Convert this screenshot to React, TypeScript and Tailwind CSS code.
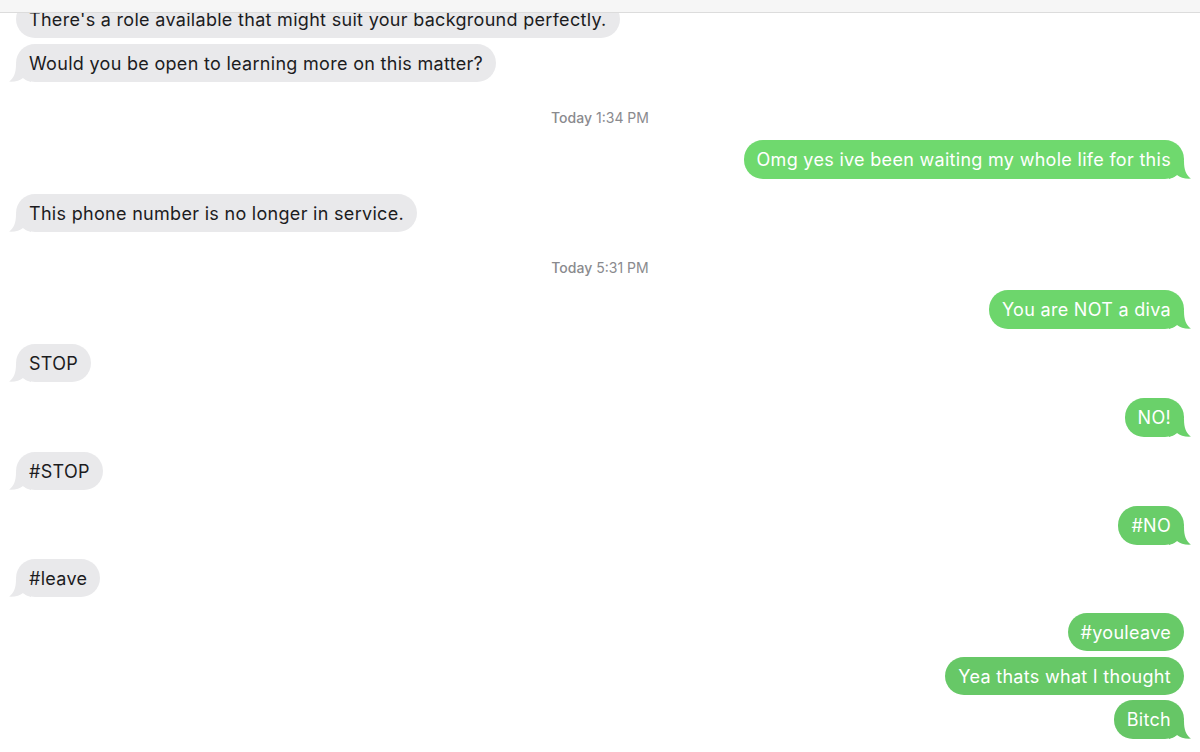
import React from "react";

type Msg =
  | { kind: "time"; day: string; time: string }
  | { kind: "in"; text: string; tail: boolean; mt: number }
  | { kind: "out"; text: string; tail: boolean; mt: number; bg: string; fill: string };

const messages: Msg[] = [
  { kind: "in", text: "There's a role available that might suit your background perfectly.", tail: false, mt: 0 },
  { kind: "in", text: "Would you be open to learning more on this matter?", tail: true, mt: 6 },
  { kind: "time", day: "Today", time: "1:34 PM" },
  { kind: "out", text: "Omg yes ive been waiting my whole life for this", tail: true, mt: 15, bg: "bg-[#6fd96e]", fill: "text-[#6fd96e]" },
  { kind: "in", text: "This phone number is no longer in service.", tail: true, mt: 15 },
  { kind: "time", day: "Today", time: "5:31 PM" },
  { kind: "out", text: "You are NOT a diva", tail: true, mt: 15, bg: "bg-[#6dd66c]", fill: "text-[#6dd66c]" },
  { kind: "in", text: "STOP", tail: true, mt: 15 },
  { kind: "out", text: "NO!", tail: true, mt: 16, bg: "bg-[#6ad16a]", fill: "text-[#6ad16a]" },
  { kind: "in", text: "#STOP", tail: true, mt: 15 },
  { kind: "out", text: "#NO", tail: true, mt: 16, bg: "bg-[#69cd69]", fill: "text-[#69cd69]" },
  { kind: "in", text: "#leave", tail: true, mt: 14 },
  { kind: "out", text: "#youleave", tail: false, mt: 16, bg: "bg-[#68ca68]", fill: "text-[#68ca68]" },
  { kind: "out", text: "Yea thats what I thought", tail: false, mt: 6, bg: "bg-[#67c867]", fill: "text-[#67c867]" },
  { kind: "out", text: "Bitch", tail: true, mt: 5, bg: "bg-[#66c666]", fill: "text-[#66c666]" },
];

const TailLeft = () => (
  <svg
    className="absolute left-[-7px] bottom-0 text-[#e9e9eb]"
    width="22"
    height="18"
    viewBox="0 0 22 18"
  >
    <path
      d="M7 0 C7 9 5 14 0 17.6 C6 18 11 16.5 14 14 C16 16 19 17 22 18 L22 0 Z"
      fill="currentColor"
    />
  </svg>
);

const TailRight = ({ color }: { color: string }) => (
  <svg
    className={`absolute right-[-7px] bottom-0 ${color}`}
    width="22"
    height="18"
    viewBox="0 0 22 18"
  >
    <path
      d="M15 0 C15 9 17 14 22 17.6 C16 18 11 16.5 8 14 C6 16 3 17 0 18 L0 0 Z"
      fill="currentColor"
    />
  </svg>
);

const App = () => {
  return (
    <div className="relative w-[1200px] h-[752px] overflow-hidden bg-white font-['Inter','Liberation_Sans',Arial,sans-serif]">
      <div className="absolute top-0 left-0 right-0 h-[13px] bg-[#f6f6f6] border-b border-[#dcdcdc] z-10" />
      <div className="flex flex-col px-[16px]">
        {messages.map((m, i) => {
          if (m.kind === "time") {
            return (
              <div
                key={i}
                className="flex justify-center mt-[27px] h-[16px] items-center text-[14px] text-[#8a8a8e]"
              >
                <span className="font-medium">{m.day}</span>
                <span className="ml-[4px]">{m.time}</span>
              </div>
            );
          }
          if (m.kind === "in") {
            return (
              <div key={i} className="flex justify-start" style={{ marginTop: m.mt }}>
                <div className="relative h-[38px] rounded-[19px] bg-[#e9e9eb] px-[13px] flex items-center text-[18px] tracking-[0.3px] text-[#1c1c1e]">
                  {m.tail && <TailLeft />}
                  <span className="relative">{m.text}</span>
                </div>
              </div>
            );
          }
          return (
            <div key={i} className="flex justify-end" style={{ marginTop: m.mt }}>
              <div
                className={`relative ${m.tail ? "h-[39px]" : "h-[38px]"} rounded-[19px] ${m.bg} px-[13px] flex items-center text-[18px] tracking-[0.3px] text-white`}
              >
                {m.tail && <TailRight color={m.fill} />}
                <span className="relative">{m.text}</span>
              </div>
            </div>
          );
        })}
      </div>
    </div>
  );
};

export default App;
